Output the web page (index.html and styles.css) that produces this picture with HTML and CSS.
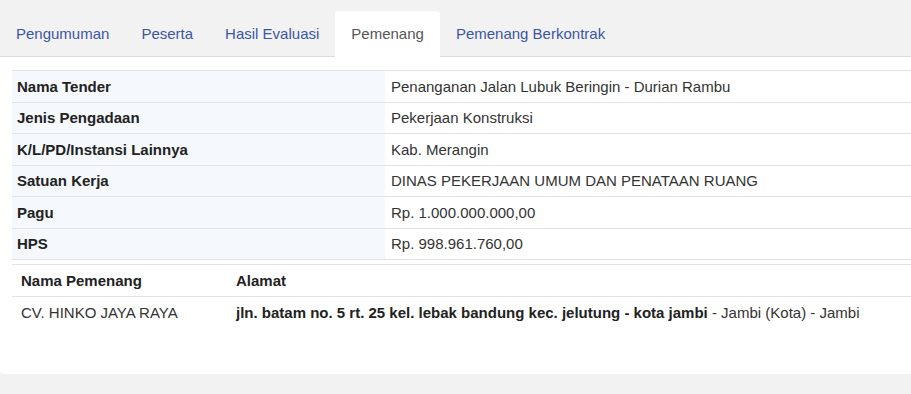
FILE: index.html
```html
<!DOCTYPE html>
<html lang="en">
<head>
    <meta charset="UTF-8">
    <meta name="viewport" content="width=device-width, initial-scale=1.0">
    <title>Pemenang</title>
    <link rel="stylesheet" href="styles.css">
</head>
<body>
<ul class="nav-tabs">
    <li><a href="#">Pengumuman</a></li>
    <li><a href="#">Peserta</a></li>
    <li><a href="#">Hasil Evaluasi</a></li>
    <li class="active"><a href="#">Pemenang</a></li>
    <li><a href="#">Pemenang Berkontrak</a></li>
</ul>
<div class="tab-content">
    <table class="info-table">
        <tr><th>Nama Tender</th><td>Penanganan Jalan Lubuk Beringin - Durian Rambu</td></tr>
        <tr><th>Jenis Pengadaan</th><td>Pekerjaan Konstruksi</td></tr>
        <tr><th>K/L/PD/Instansi Lainnya</th><td>Kab. Merangin</td></tr>
        <tr><th>Satuan Kerja</th><td>DINAS PEKERJAAN UMUM DAN PENATAAN RUANG</td></tr>
        <tr><th>Pagu</th><td>Rp. 1.000.000.000,00</td></tr>
        <tr><th>HPS</th><td>Rp. 998.961.760,00</td></tr>
    </table>
    <table class="winner-table">
        <tr><th class="col-name">Nama Pemenang</th><th>Alamat</th></tr>
        <tr>
            <td>CV. HINKO JAYA RAYA</td>
            <td><strong>jln. batam no. 5 rt. 25 kel. lebak bandung kec. jelutung - kota jambi</strong> - Jambi (Kota) - Jambi</td>
        </tr>
    </table>
</div>
</body>
</html>
```

FILE: styles.css
```css
body {
    background-color: #f2f2f3;
    color: #333333;
    font-family: "Liberation Sans", Arial, sans-serif;
    font-size: 15px;
    margin: 0;
    padding: 0;
}

.nav-tabs {
    list-style: none;
    margin: 0;
    padding: 11px 0 0 0;
    display: flex;
    border-bottom: 1px solid #dddddd;
}

.nav-tabs li a {
    display: block;
    padding: 0 16px;
    height: 45px;
    line-height: 45px;
    color: #3b56a6;
    text-decoration: none;
    border-radius: 4px 4px 0 0;
}

.nav-tabs li.active a {
    background-color: #ffffff;
    color: #555555;
    margin-bottom: -1px;
    height: 46px;
}

.tab-content {
    background-color: #ffffff;
    border-radius: 0 0 0 4px;
    padding: 13px 0 46px 12px;
}

table {
    border-collapse: collapse;
    width: 100%;
}

.info-table th,
.info-table td {
    border-top: 1px solid #e3e3e3;
    padding: 0 5px;
    height: 30.5px;
    text-align: left;
    vertical-align: middle;
}

.info-table tr:last-child th,
.info-table tr:last-child td {
    border-bottom: 1px solid #e3e3e3;
}

.info-table th {
    width: 363px;
    background-color: #f5f8fc;
    color: #222222;
    font-weight: bold;
}

.info-table td {
    padding-left: 6px;
}

.winner-table {
    margin-top: 4px;
}

.winner-table th,
.winner-table td {
    padding: 0 9px;
    height: 31px;
    text-align: left;
    vertical-align: middle;
}

.winner-table th {
    border-top: 1px solid #e3e3e3;
    border-bottom: 1px solid #e3e3e3;
    color: #222222;
}

.winner-table .col-name {
    width: 197px;
}

.winner-table strong {
    color: #222222;
}
```
